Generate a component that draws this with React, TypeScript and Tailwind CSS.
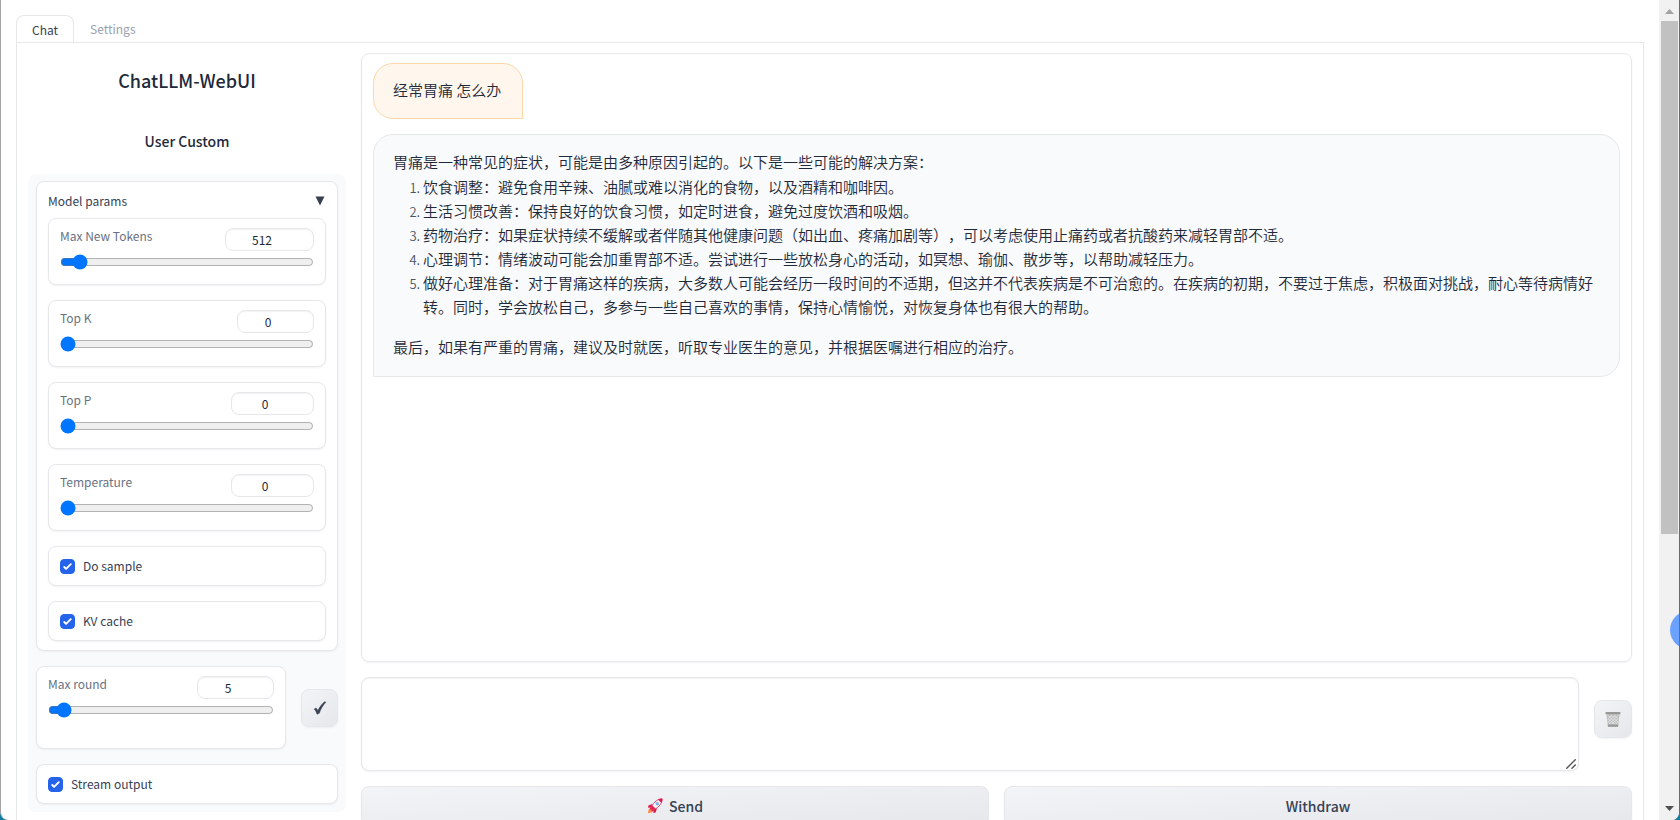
import React, { useId, useState } from "react";

function NumberSlider({
  label,
  initial,
  min,
  max,
  inputClass,
  cardClass,
}: {
  label: string;
  initial: number;
  min: number;
  max: number;
  inputClass: string;
  cardClass: string;
}) {
  const id = useId();
  const [value, setValue] = useState(initial);
  const change = (e: React.ChangeEvent<HTMLInputElement>) => setValue(Number(e.target.value));
  return (
    <div className={`rounded-lg border border-gray-200 bg-white shadow-xs ${cardClass}`}>
      <div className="flex items-start justify-between">
        <label htmlFor={id} className="text-xs leading-4 text-gray-500">
          {label}
        </label>
        <input
          id={id}
          type="number"
          value={value}
          min={min}
          max={max}
          onChange={change}
          className={`h-[23px] rounded-lg border border-gray-200 bg-white text-center text-xs leading-4 text-gray-800 inset-shadow-xs ${inputClass}`}
        />
      </div>
      <input
        type="range"
        aria-label={label}
        value={value}
        min={min}
        max={max}
        onChange={change}
        className="mt-[3px] block h-4 w-full"
      />
    </div>
  );
}

function Tick({ label }: { label: string }) {
  return (
    <div className="rounded-lg border border-gray-200 bg-white px-[11px] py-[11px] shadow-xs">
      <label className="flex items-center gap-2 text-xs leading-4 text-gray-700">
        <span className="relative block size-[15px]">
          <input
            type="checkbox"
            defaultChecked
            className="peer block size-[15px] appearance-none rounded border border-gray-300 checked:border-[#2563eb] checked:bg-[#2563eb]"
          />
          <svg
            viewBox="0 0 16 16"
            className="pointer-events-none absolute inset-0 hidden size-[15px] peer-checked:block"
            fill="white"
          >
            <path d="M12.207 4.793a1 1 0 010 1.414l-5 5a1 1 0 01-1.414 0l-2-2a1 1 0 011.414-1.414L6.5 9.086l4.293-4.293a1 1 0 011.414 0z" />
          </svg>
        </span>
        {label}
      </label>
    </div>
  );
}

function Rocket() {
  return (
    <svg viewBox="0 0 16 16" className="size-4" aria-hidden="true">
      <path d="M1 15.2 1.6 11.6 4 9.4 6.8 12.2 4.6 14.6Z" fill="#ff8a4c" />
      <path d="M5.4 6 1.4 7.6 1 9.8 4.4 9.6ZM10 10.6 8.6 14.4 6.4 15 6.4 11.6Z" fill="#d81b50" />
      <path d="M15 1C11 1 7.200 3.400 4 9.200L6.800 12C12.600 8.800 15 5 15 1Z" fill="#f7f3f7" stroke="#d81b50" strokeWidth="0.8" />
      <path d="M15.400.6C13.800.5 12.200.8 11 1.500L14.500 5C15.200 3.800 15.500 2.200 15.400.6Z" fill="#d81b50" />
      <path d="M5.400 7.400 2.600 10.600 5.400 13.400 8.600 10.600Z" fill="#e8284f" />
      <circle cx="10.300" cy="5.700" r="1.700" fill="#7fb2dc" />
    </svg>
  );
}

function Basket() {
  return (
    <svg viewBox="0 0 16 16" className="size-4" aria-hidden="true">
      <path d="M1.300 2.500H14.700L13 15.500H3Z" fill="#bdbdbd" />
      <path
        d="M2.500 4 12.500 13.500M5.500 4 13 11M8.800 4 13.400 8.300M2.900 7.500 9.800 13.500M3.300 11 6 13.500M13.500 4 3.500 13.500M10.500 4 3 11M7.200 4 2.600 8.300M13.100 7.500 6.200 13.500M12.700 11 10 13.500"
        stroke="#e6e6e6"
        strokeWidth="0.8"
      />
      <path d="M.6 1H15.400V3.200H.6Z" fill="#969996" />
      <path d="M2.600 13.500H13.400L13 15.800H3Z" fill="#969996" />
    </svg>
  );
}

const advice = [
  "饮食调整：避免食用辛辣、油腻或难以消化的食物，以及酒精和咖啡因。",
  "生活习惯改善：保持良好的饮食习惯，如定时进食，避免过度饮酒和吸烟。",
  "药物治疗：如果症状持续不缓解或者伴随其他健康问题（如出血、疼痛加剧等），可以考虑使用止痛药或者抗酸药来减轻胃部不适。",
  "心理调节：情绪波动可能会加重胃部不适。尝试进行一些放松身心的活动，如冥想、瑜伽、散步等，以帮助减轻压力。",
  "做好心理准备：对于胃痛这样的疾病，大多数人可能会经历一段时间的不适期，但这并不代表疾病是不可治愈的。在疾病的初期，不要过于焦虑，积极面对挑战，耐心等待病情好转。同时，学会放松自己，多参与一些自己喜欢的事情，保持心情愉悦，对恢复身体也有很大的帮助。",
];

const button =
  "rounded-lg border border-gray-200 bg-linear-to-br from-gray-100 to-gray-200 text-gray-700 shadow-xs";

const sliderCard = "px-[11px] pt-[9px] pb-[14px]";

export default function App() {
  return (
    <div className="h-screen overflow-hidden bg-[#0f7ea3] font-['Noto_Sans_CJK_SC',sans-serif]">
      <div className="relative flex h-full overflow-hidden rounded-b-lg border-r border-l border-r-[#2f7f9b] border-l-[#a3a3a3] bg-white">
        <div className="flex min-w-0 flex-1 flex-col pt-[15px] pr-[15px] pl-[15px]">
          <nav className="flex text-xs leading-4">
            <button className="-mb-px h-7 rounded-t-lg border border-b-0 border-gray-200 bg-white px-[15px] text-gray-700">
              Chat
            </button>
            <button className="h-[27px] px-4 text-gray-400">Settings</button>
          </nav>
          <main className="flex min-h-0 flex-1 items-start gap-[15px] overflow-hidden border-x border-t border-gray-200 px-[11px] pt-[10px]">
            <aside className="w-[318px] shrink-0">
              <h1 className="pt-[15px] text-center text-lg leading-6 font-medium text-gray-800">
                ChatLLM-WebUI
              </h1>
              <h2 className="pt-[39px] text-center text-sm leading-5 font-medium text-gray-800">
                User Custom
              </h2>
              <div className="mt-[23px] flex flex-col gap-[15px] rounded-lg bg-gray-50 p-2 pt-[7px]">
                <section className="rounded-lg border border-gray-200 bg-white px-[11px] pt-[11px] pb-[9px] shadow-xs">
                  <button className="flex w-full items-center justify-between pb-[9px] text-xs leading-4 text-gray-700">
                    Model params
                    <svg viewBox="0 0 10 10" className="mr-px size-[10px]" fill="#374151">
                      <path d="M.5.5H9.500L5 9.500Z" />
                    </svg>
                  </button>
                  <div className="flex flex-col gap-[15px]">
                    <NumberSlider label="Max New Tokens" initial={512} min={0} max={10000} inputClass="w-[89px]" cardClass={sliderCard} />
                    <NumberSlider label="Top K" initial={0} min={0} max={100} inputClass="w-[77px]" cardClass={sliderCard} />
                    <NumberSlider label="Top P" initial={0} min={0} max={1} inputClass="w-[83px]" cardClass={sliderCard} />
                    <NumberSlider label="Temperature" initial={0} min={0} max={1} inputClass="w-[83px]" cardClass={sliderCard} />
                    <Tick label="Do sample" />
                    <Tick label="KV cache" />
                  </div>
                </section>
                <div className="flex items-center gap-[15px]">
                  <div className="min-w-0 flex-1">
                    <NumberSlider label="Max round" initial={5} min={1} max={100} inputClass="w-[77px]" cardClass="px-[11px] pt-[9px] pb-[30px]" />
                  </div>
                  <button aria-label="Apply" className={`flex h-[38px] w-[37px] items-center justify-center ${button}`}>
                    <svg viewBox="0 0 14 14" className="size-[14px]" fill="#374151" stroke="#374151" strokeWidth="0.5">
                      <path d="M1.200 8.200C2 7 3.300 6.900 4 8L4.900 9.700C6.500 6.200 8.800 3 11.600.8L12.900 1.100C9.900 4.300 7.800 8 6.300 12.300L4 13.200C3.400 11.300 2.500 9 1.200 8.200Z" />
                    </svg>
                  </button>
                </div>
                <Tick label="Stream output" />
              </div>
            </aside>
            <section className="flex min-w-0 flex-1 flex-col gap-[15px]">
              <div className="flex h-[609px] flex-col items-start gap-[15px] rounded-lg border border-gray-200 px-[11px] py-[9px] text-[15px] leading-6 font-[350] text-gray-800 shadow-xs [text-spacing-trim:space-all]">
                <div className="rounded-[20px] rounded-br-none border border-orange-200 bg-orange-50 pt-[14px] pr-[21px] pb-4 pl-[19px]">
                  经常胃痛 怎么办
                </div>
                <div className="w-full rounded-[20px] rounded-bl-none border border-gray-200 bg-gray-50 px-[19px] pt-[15px] pb-[17px]">
                  <p>胃痛是一种常见的症状，可能是由多种原因引起的。以下是一些可能的解决方案：</p>
                  <ol className="mt-px list-decimal pl-[30px] marker:text-[13px] marker:text-gray-600">
                    {advice.map((text) => (
                      <li key={text}>{text}</li>
                    ))}
                  </ol>
                  <p className="mt-4">最后，如果有严重的胃痛，建议及时就医，听取专业医生的意见，并根据医嘱进行相应的治疗。</p>
                </div>
              </div>
              <div className="flex items-start gap-[15px]">
                <div className="relative min-w-0 flex-1">
                  <textarea
                    aria-label="Message"
                    className="block h-[94px] w-full resize-none rounded-lg border border-gray-200 bg-white p-2 text-[15px] shadow-xs inset-shadow-xs"
                  />
                  <svg viewBox="0 0 10 10" className="pointer-events-none absolute right-[3px] bottom-[2px] size-[10px]" stroke="#555" strokeWidth="1.400">
                    <path d="M.3 9.700 9.700.3M5.500 9.700 9.700 5.500" />
                  </svg>
                </div>
                <button aria-label="Clear" className={`mt-[23px] flex size-[38px] items-center justify-center ${button}`}>
                  <Basket />
                </button>
              </div>
              <div className="flex gap-[15px] text-sm leading-5 font-medium">
                <button className={`flex h-10 flex-1 items-center justify-center gap-[6px] ${button}`}>
                  <Rocket />
                  Send
                </button>
                <button className={`h-10 flex-1 ${button}`}>Withdraw</button>
              </div>
            </section>
          </main>
        </div>
        <div className="flex w-5 shrink-0 flex-col items-center bg-[#f1f1f1]" aria-hidden="true">
          <svg viewBox="0 0 9 5" className="mt-[9px] h-[5px] w-[9px]" fill="#a3a3a3">
            <path d="M0 5 4.500 0 9 5Z" />
          </svg>
          <div className="mt-[7px] h-[62.5%] w-[17px] bg-[#c1c1c1]" />
          <svg viewBox="0 0 9 5" className="mt-auto mb-[9px] h-[5px] w-[9px]" fill="#505050">
            <path d="M0 0 4.500 5 9 0Z" />
          </svg>
        </div>
        <div className="absolute top-[611px] -right-[29px] size-[38px] rounded-full bg-[#6ba1ff]" />
      </div>
    </div>
  );
}
